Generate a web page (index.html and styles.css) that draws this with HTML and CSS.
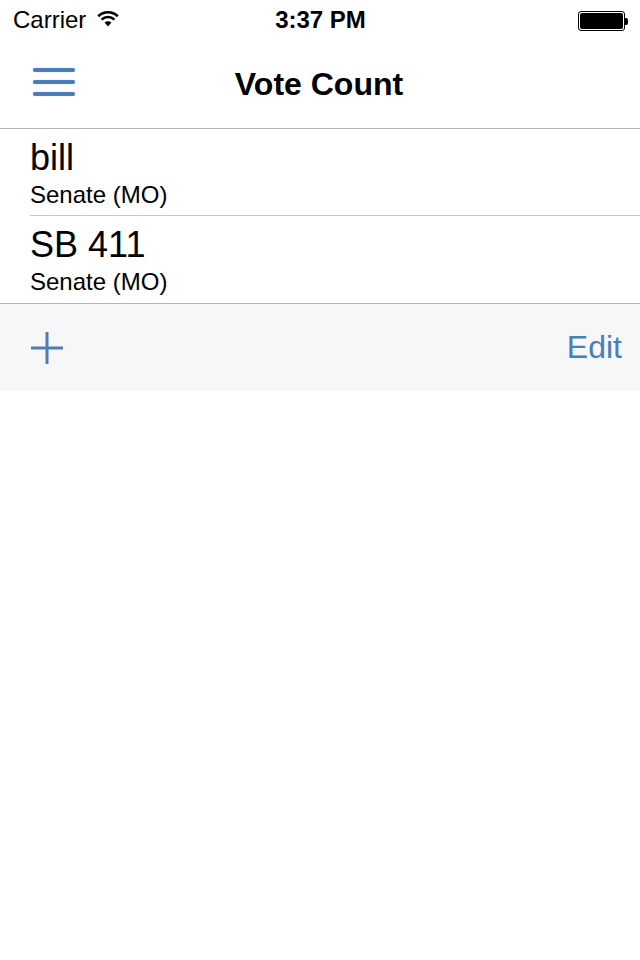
FILE: index.html
```html
<!DOCTYPE html>
<html>
<head>
<meta charset="utf-8">
<link rel="stylesheet" href="styles.css">
</head>
<body>
<div class="screen">
  <div class="status">
    <div class="status-left">
      <span class="carrier">Carrier</span>
      <svg class="wifi" width="22" height="17" viewBox="0 0 22 17">
        <path d="M1.2 6.2 A14 14 0 0 1 20.8 6.2" fill="none" stroke="#000" stroke-width="2.6"/>
        <path d="M4.6 9.6 A9.2 9.2 0 0 1 17.4 9.6" fill="none" stroke="#000" stroke-width="2.6"/>
        <path d="M11 16.5 L7.6 12.6 A4.8 4.8 0 0 1 14.4 12.6 Z" fill="#000"/>
      </svg>
    </div>
    <div class="time">3:37 PM</div>
    <div class="status-right">
      <div class="battery"><div class="battery-fill"></div></div>
      <div class="battery-nub"></div>
    </div>
  </div>
  <div class="navbar">
    <div class="nav-left">
      <div class="menu-icon"><span></span><span></span><span></span></div>
    </div>
    <div class="nav-title">Vote Count</div>
    <div class="nav-right"></div>
  </div>
  <ul class="list">
    <li class="row">
      <div class="row-title">bill</div>
      <div class="row-sub">Senate (MO)</div>
    </li>
    <li class="row">
      <div class="row-title">SB 411</div>
      <div class="row-sub">Senate (MO)</div>
    </li>
  </ul>
  <div class="toolbar">
    <svg class="plus" width="32" height="32" viewBox="0 0 32 32">
      <rect x="14.5" y="0" width="3" height="32" fill="#4a7eb9"/>
      <rect x="0" y="14.5" width="32" height="3" fill="#4a7eb9"/>
    </svg>
    <span class="edit">Edit</span>
  </div>
</div>
</body>
</html>
```
FILE: styles.css
```css
html, body {
  margin: 0;
  padding: 0;
  background: #fff;
}
body {
  font-family: "Liberation Sans", Arial, sans-serif;
  color: #000;
}
.screen {
  width: 640px;
  height: 960px;
  background: #fff;
}
.status {
  height: 40px;
  display: grid;
  grid-template-columns: 1fr auto 1fr;
  align-items: center;
  padding: 0 12px 0 13px;
}
.status-left {
  display: flex;
  align-items: center;
  gap: 11px;
}
.carrier {
  font-size: 24px;
}
.wifi {
  margin-top: -3px;
}
.time {
  font-size: 24px;
  font-weight: bold;
}
.status-right {
  display: flex;
  justify-content: flex-end;
  align-items: center;
  padding-top: 2px;
}
.battery {
  width: 43px;
  height: 16px;
  border: 1px solid #000;
  border-radius: 3px;
  padding: 1px;
  box-sizing: content-box;
  display: flex;
}
.battery-fill {
  flex: 1;
  background: #000;
  border-radius: 2px;
}
.battery-nub {
  width: 3px;
  height: 7px;
  background: #000;
  border-radius: 0 2px 2px 0;
}
.navbar {
  height: 88px;
  border-bottom: 1px solid #b2b2b2;
  display: grid;
  grid-template-columns: 1fr auto 1fr;
  align-items: center;
}
.nav-left {
  padding-left: 33px;
  padding-bottom: 5px;
}
.menu-icon {
  width: 42px;
  display: flex;
  flex-direction: column;
  gap: 8px;
}
.menu-icon span {
  display: block;
  height: 4px;
  border-radius: 2px;
  background: #4a7eb9;
  box-shadow: 0 0 1px rgba(74, 126, 185, 0.6);
}
.nav-title {
  font-size: 32px;
  font-weight: bold;
  padding-right: 2px;
}
.list {
  list-style: none;
  margin: 0;
  padding: 0;
}
.row {
  margin-left: 30px;
  padding: 11px 0 6px 0;
  border-bottom: 1px solid #c8c7cc;
  display: flex;
  flex-direction: column;
  gap: 5px;
}
.row:last-child {
  border-bottom: none;
  padding-bottom: 7px;
}
.row-title {
  font-size: 36px;
  line-height: 36px;
}
.row-sub {
  font-size: 24px;
  line-height: 28px;
}
.toolbar {
  height: 87px;
  border-top: 1px solid #b2b2b2;
  background: #f7f7f7;
  display: flex;
  align-items: center;
  justify-content: space-between;
  padding: 0 18px 0 31px;
}
.plus {
  display: block;
}
.edit {
  font-size: 32px;
  color: #4a7eb9;
}
```
